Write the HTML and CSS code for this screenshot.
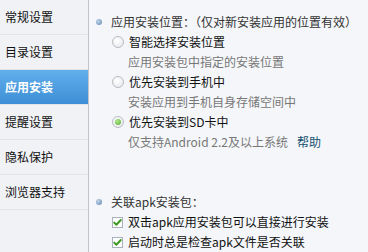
FILE: index.html
```html
<!DOCTYPE html>
<html lang="zh-CN">
<head>
<meta charset="utf-8">
<link rel="stylesheet" href="styles.css">
</head>
<body>
<div class="app">
  <nav class="side">
    <div class="item">常规设置</div>
    <div class="item">目录设置</div>
    <div class="item active">应用安装</div>
    <div class="item">提醒设置</div>
    <div class="item">隐私保护</div>
    <div class="item">浏览器支持</div>
  </nav>
  <main class="content">
    <div class="title"><span class="dot"></span>应用安装位置：（仅对新安装应用的位置有效）</div>
    <div class="opt"><span class="radio"></span>智能选择安装位置</div>
    <div class="desc">应用安装包中指定的安装位置</div>
    <div class="opt"><span class="radio"></span>优先安装到手机中</div>
    <div class="desc">安装应用到手机自身存储空间中</div>
    <div class="opt"><span class="radio on"></span>优先安装到SD卡中</div>
    <div class="desc">仅支持Android 2.2及以上系统<a class="help">帮助</a></div>
    <div class="title gap"><span class="dot"></span>关联apk安装包：</div>
    <div class="opt"><span class="check"><svg viewBox="0 0 11 11" width="11" height="11"><path d="M2.2 5.6 L4.4 7.8 L8.8 3" fill="none" stroke="#3f9a23" stroke-width="2" stroke-linecap="round" stroke-linejoin="round"/></svg></span>双击apk应用安装包可以直接进行安装</div>
    <div class="opt"><span class="check"><svg viewBox="0 0 11 11" width="11" height="11"><path d="M2.2 5.6 L4.4 7.8 L8.8 3" fill="none" stroke="#3f9a23" stroke-width="2" stroke-linecap="round" stroke-linejoin="round"/></svg></span>启动时总是检查apk文件是否关联</div>
  </main>
</div>
</body>
</html>
```

FILE: styles.css
```css
* { box-sizing: border-box; }
html, body {
  margin: 0;
  padding: 0;
  width: 368px;
  height: 252px;
  overflow: hidden;
}
body {
  font-family: "Noto Sans CJK SC", "Liberation Sans", sans-serif;
  font-size: 12px;
  color: #222;
  background: #f4f6f9;
}
.app {
  display: flex;
  height: 252px;
}
.side {
  width: 89px;
  flex: none;
  background: #f0f2f5;
  border-right: 1px solid #bfc4ca;
}
.item {
  height: 35px;
  line-height: 34px;
  padding-left: 5px;
  border-bottom: 1px solid #e1e4e8;
  color: #111;
}
.item.active {
  background: linear-gradient(#62afeb, #3d8ed6);
  color: #fff;
  font-weight: bold;
}
.content {
  flex: 1;
  padding: 12px 0 0 7px;
  line-height: 20px;
}
.title {
  display: flex;
  align-items: center;
  color: #333;
}
.title.gap { margin-top: 40px; }
.dot {
  width: 6px;
  height: 6px;
  border-radius: 50%;
  background: radial-gradient(circle at 35% 35%, #c3d6ea, #5d86b2);
  margin-right: 9px;
}
.opt {
  display: flex;
  align-items: center;
  padding-left: 16px;
  color: #111;
}
.radio {
  width: 12px;
  height: 12px;
  border-radius: 50%;
  border: 1px solid #b8bcc2;
  background: radial-gradient(circle at 40% 35%, #ffffff, #e3e6ea);
  margin-right: 5px;
  display: flex;
  align-items: center;
  justify-content: center;
}
.radio.on::after {
  content: "";
  width: 6px;
  height: 6px;
  border-radius: 50%;
  background: radial-gradient(circle at 40% 35%, #b6ea8c, #4aa628);
}
.check {
  width: 11px;
  height: 11px;
  border: 1px solid #a8b2bc;
  background: #fff;
  margin-right: 5px;
  display: flex;
  align-items: center;
  justify-content: center;
}
.check svg { display: block; flex: none; }
.desc {
  padding-left: 32px;
  color: #777;
}
.help {
  color: #14506f;
  margin-left: 9px;
}
```
